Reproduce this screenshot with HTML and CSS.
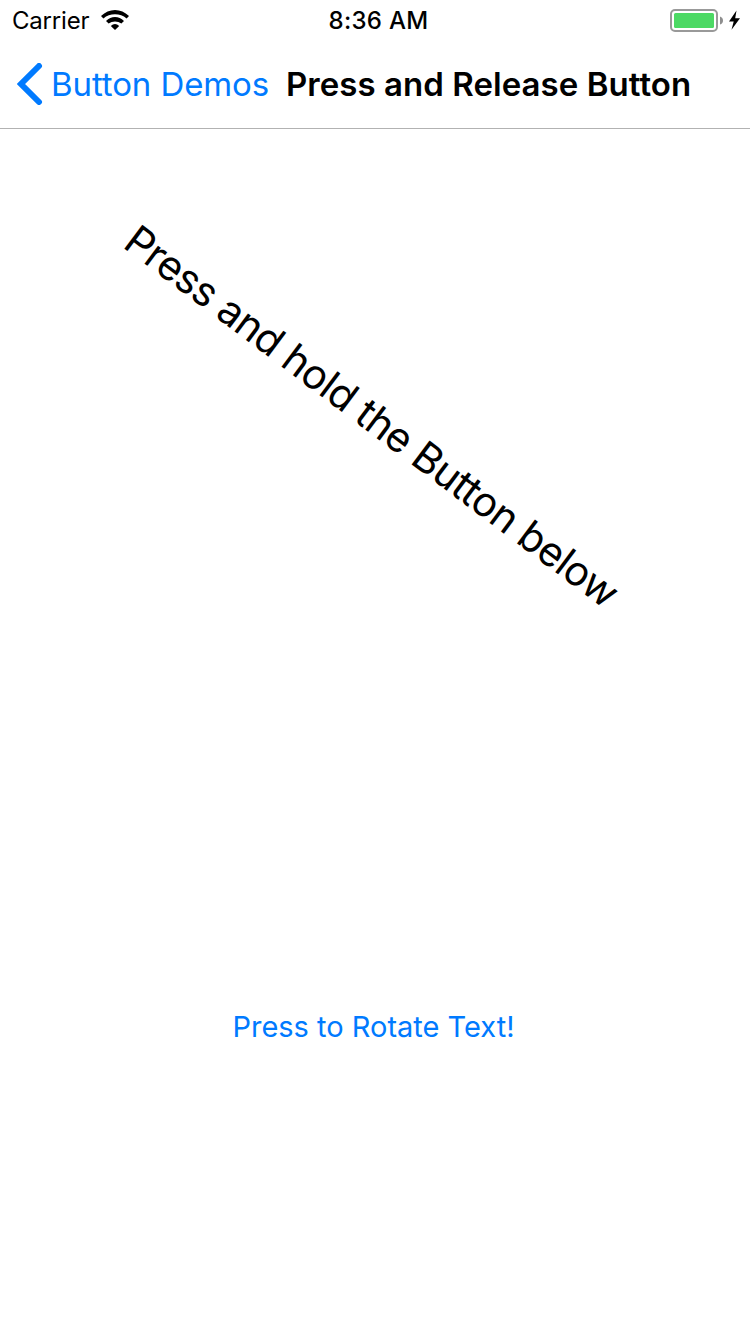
FILE: index.html
```html
<!DOCTYPE html>
<html lang="en">
<head>
<meta charset="utf-8">
<title>Press and Release Button</title>
<link rel="stylesheet" href="styles.css">
</head>
<body>
<header class="header">
  <div class="status">
    <div class="status-left">
      <span class="carrier">Carrier</span>
      <svg class="wifi" width="28" height="20" viewBox="0 0 28 20">
        <path d="M0 6.1Q6.2 0 14 0T28 6.1L25.6 8.5Q20.6 4.3 14 4.3T2.4 8.5Z"/>
        <path d="M5 11.1Q9 7 14 7T23 11.1L20.4 13.6Q17.5 11.4 14 11.4T7.6 13.6Z"/>
        <path d="M9.8 15.9Q14 12.2 18.2 15.9L14 20Z"/>
      </svg>
    </div>
    <span class="time">8:36 AM</span>
    <div class="status-right">
      <svg class="battery" width="72" height="24" viewBox="0 0 72 24">
        <rect x="1" y="1" width="46" height="21" rx="4" fill="none" stroke="#999" stroke-width="2"/>
        <rect x="4" y="4" width="40" height="15" rx="1.5" fill="#4cd964"/>
        <path d="M50 7.5Q53 8.5 53 11.5T50 15.5Z" fill="#8e8e8e"/>
        <path d="M66.5 1.5L59 12.5H63.7L61.5 20.7L70 9.2H65.2Z"/>
      </svg>
    </div>
  </div>
  <nav class="nav">
    <a class="back">
      <svg class="chevron" width="26" height="42" viewBox="0 0 26 42"><path d="M22 3L4 21L22 39"/></svg>
      <span class="back-label">Button Demos</span>
    </a>
    <h1 class="title">Press and Release Button</h1>
  </nav>
</header>
<main class="content">
  <section class="pane"><p class="label">Press and hold the Button below</p></section>
  <section class="pane"><button class="press">Press to Rotate Text!</button></section>
</main>
</body>
</html>
```
FILE: styles.css
```css
* { box-sizing: border-box; }
body {
  margin: 0;
  height: 1334px;
  display: flex;
  flex-direction: column;
  background: #fff;
  color: #000;
  font-family: Inter, "Liberation Sans", sans-serif;
  white-space: nowrap;
  overflow: hidden;
}
.header { height: 129px; border-bottom: 1px solid #b2b2b2; }
.status {
  height: 40px;
  display: grid;
  grid-template-columns: 328.5px 1fr 80px;
  align-items: center;
  font-size: 24px;
  line-height: 38px;
}
.status-left { display: flex; align-items: center; padding-left: 12px; gap: 12px; }
.status-right { padding-top: 2px; }
.carrier { width: 77px; padding-top: 2px; letter-spacing: -0.2px; }
.time { padding-top: 2px; font-weight: 500; letter-spacing: 0.3px; }
.battery, .wifi, .chevron { display: block; }
.nav { height: 88px; display: flex; align-items: center; line-height: 86px; }
.back { display: flex; align-items: center; padding-left: 17px; gap: 8px; color: #007aff; width: 286px; font-size: 33px; letter-spacing: -0.1px; }
.back-label { padding-bottom: 1px; }
.chevron path { fill: none; stroke: #007aff; stroke-width: 6; stroke-linecap: round; stroke-linejoin: miter; }
.title { margin: 0; padding-bottom: 1px; font-size: 33px; font-weight: 600; letter-spacing: 0.05px; }
.content { flex: 1; display: grid; grid-template-rows: 574px 1fr; }
.pane { display: flex; align-items: center; justify-content: center; }
.label { margin: 0 5px 0 0; font-size: 41px; line-height: 52px; letter-spacing: -0.67px; transform: rotate(36.9deg); }
.press { margin-top: 16px; border: 0; padding: 0 3px 0 0; background: none; font: 29px/44px Inter, "Liberation Sans", sans-serif; color: #007aff; }
```
